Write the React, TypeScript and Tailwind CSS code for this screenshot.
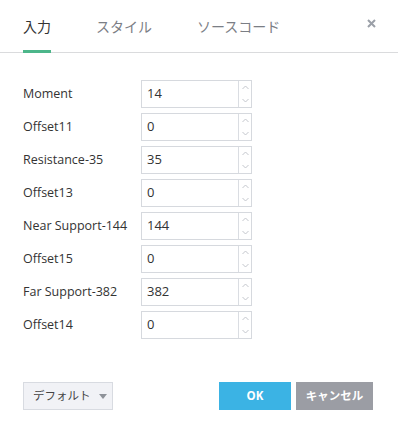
import type { ReactNode } from "react";

const rows = [
  { label: "Moment", value: "14" },
  { label: "Offset11", value: "0" },
  { label: "Resistance-35", value: "35" },
  { label: "Offset13", value: "0" },
  { label: "Near Support-144", value: "144" },
  { label: "Offset15", value: "0" },
  { label: "Far Support-382", value: "382" },
  { label: "Offset14", value: "0" },
];

const font = "font-['Open_Sans','Noto_Sans_CJK_JP',sans-serif]";

function Tab({ children, active }: { children: ReactNode; active?: boolean }) {
  return (
    <div
      className={
        active
          ? "flex items-center border-b-[3px] border-[#4cb68a] pt-[3px] -mb-px text-[#333]"
          : "flex items-center border-b-[3px] border-transparent pt-[3px] -mb-px text-[#7b7e85]"
      }
    >
      {children}
    </div>
  );
}

function Spinner() {
  return (
    <div className="flex w-[13px] flex-col border-l border-[#dadde2]">
      <div className="flex flex-1 items-center justify-center">
        <svg width="7" height="5" viewBox="0 0 7 5" fill="none">
          <path d="M0.5 4L3.5 1L6.5 4" stroke="#c3c6cc" strokeWidth="1" />
        </svg>
      </div>
      <div className="flex flex-1 items-center justify-center">
        <svg width="7" height="5" viewBox="0 0 7 5" fill="none">
          <path d="M0.5 1L3.5 4L6.5 1" stroke="#c3c6cc" strokeWidth="1" />
        </svg>
      </div>
    </div>
  );
}

export default function App() {
  return (
    <div className={`flex h-[435px] w-[398px] flex-col bg-white ${font}`}>
      <div className="flex h-[53px] items-stretch border-b border-[#dadbdd] pl-[23px] pr-[22px] text-[14px]">
        <div className="flex flex-1 gap-[45px]">
          <Tab active>入力</Tab>
          <Tab>スタイル</Tab>
          <Tab>ソースコード</Tab>
        </div>
        <div className="flex items-center pb-[5px]">
          <svg width="9" height="9" viewBox="0 0 9 9">
            <path d="M1 1L8 8M8 1L1 8" stroke="#9ba0a8" strokeWidth="2" />
          </svg>
        </div>
      </div>

      <div className="mt-[27px] flex flex-col gap-[5px] pl-[23px]">
        {rows.map((row) => (
          <div key={row.label} className="flex h-[28px] items-center">
            <div className="w-[118px] text-[12.5px] text-[#333]">{row.label}</div>
            <div className="flex h-full w-[111px] border border-[#d6d9de]">
              <div className="flex flex-1 items-center pl-[5px] text-[13px] text-[#333]">{row.value}</div>
              <Spinner />
            </div>
          </div>
        ))}
      </div>

      <div className="mt-[43px] flex items-center pl-[23px] pr-[25px]">
        <div className="flex h-[28px] w-[90px] items-center border border-[#d8dbe1] bg-[#f1f2f6] pl-[9px] text-[11.5px] text-[#444]">
          <span>デフォルト</span>
          <svg className="ml-[8px]" width="8" height="5" viewBox="0 0 8 5">
            <path d="M0 0H8L4 5Z" fill="#8e9299" />
          </svg>
        </div>
        <div className="ml-auto flex gap-[5px]">
          <div className="flex h-[28px] w-[72px] items-center justify-center bg-[#3bb3e4] text-[11.5px] font-bold text-white">
            OK
          </div>
          <div className="flex h-[28px] w-[77px] items-center justify-center bg-[#9b9da4] text-[11.5px] font-bold text-white">
            キャンセル
          </div>
        </div>
      </div>
    </div>
  );
}
